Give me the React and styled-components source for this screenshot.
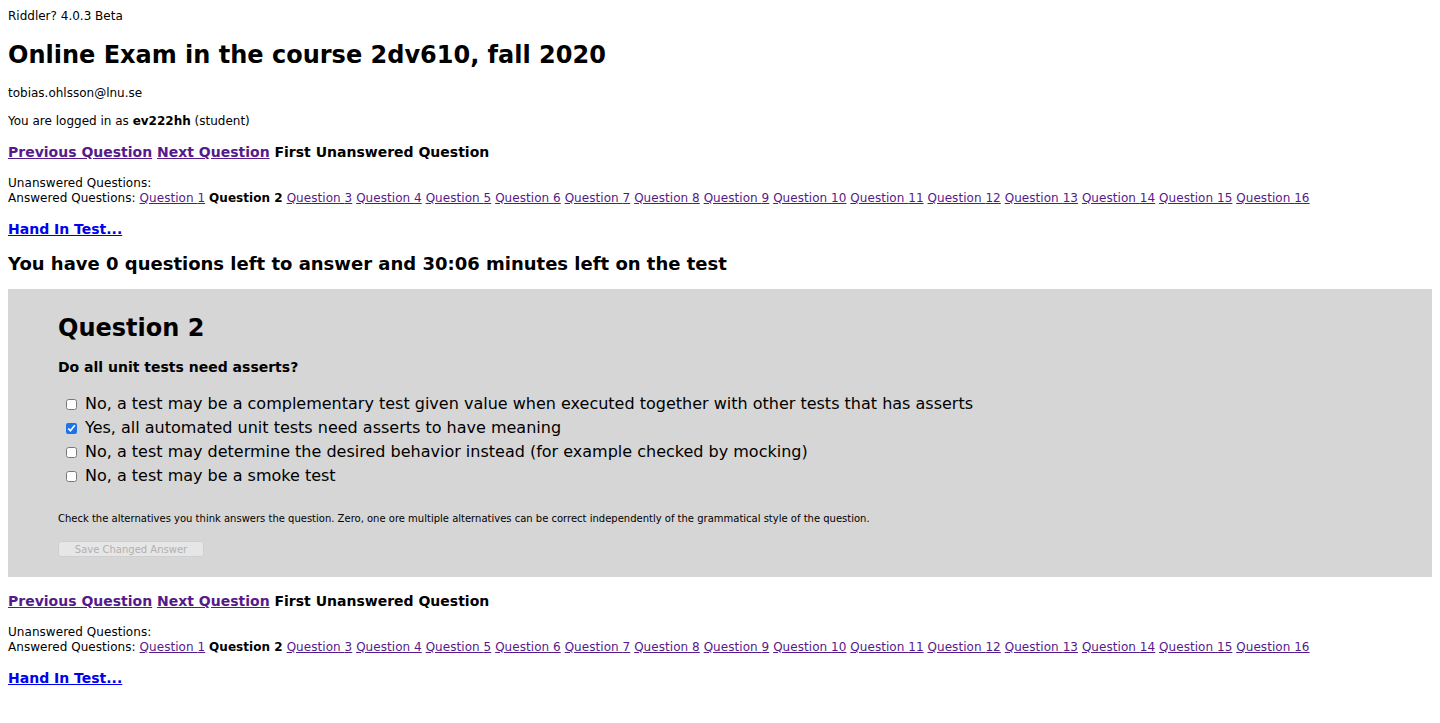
import styled, { createGlobalStyle } from 'styled-components';

const GlobalStyle = createGlobalStyle`
    body {
        margin: 0;
        background: #fff;
        color: #000;
        font-family: "DejaVu Sans", Verdana, sans-serif;
    }
`;

const Page = styled.div`
    padding: 8px 8px 20px;
`;

const Version = styled.div`
    font-size: 12px;
    line-height: 16px;
`;

const Title = styled.h1`
    margin: 15px 0 0;
    font-size: 24px;
    line-height: 32px;
    font-weight: bold;
`;

const Line = styled.p`
    margin: ${({top}) => top}px 0 0;
    font-size: 12px;
    line-height: 16px;
`;

const Nav = styled.div`
    margin-top: ${({top}) => top}px;
    font-size: 14px;
    line-height: 18px;
    font-weight: bold;
`;

const VisitedLink = styled.a`
    color: #551a8b;
    text-decoration: underline;
`;

const HandInLink = styled.a`
    color: #0000ee;
    text-decoration: underline;
    font-weight: bold;
`;

const QuestionList = styled.div`
    margin-top: ${({top}) => top}px;
    font-size: 12px;
    line-height: 15px;
    letter-spacing: 0.05px;
`;

const HandIn = styled.div`
    margin-top: ${({top}) => top}px;
    font-size: 14px;
    line-height: 18px;
`;

const Status = styled.h2`
    margin: 14px 0 0;
    font-size: 18px;
    line-height: 24px;
`;

const QuestionBox = styled.section`
    margin-top: 13px;
    background: #d6d6d6;
    padding: 24px 50px 20px;
`;

const QuestionTitle = styled.h3`
    margin: 0;
    font-size: 24px;
    line-height: 31px;
`;

const QuestionText = styled.p`
    margin: 15px 0 0;
    font-size: 14px;
    line-height: 17px;
    font-weight: bold;
`;

const Options = styled.div`
    margin-top: 16px;
    padding-left: 8px;
`;

const Option = styled.label`
    display: flex;
    align-items: center;
    font-size: 16px;
    line-height: 24px;
`;

const Box = styled.input`
    width: 11px;
    height: 11px;
    margin: 1px 8px 0 0;
    accent-color: #1a73e8;
`;

const Note = styled.p`
    margin: 24px 0 0;
    font-size: 10px;
    line-height: 14px;
`;

const SaveButton = styled.button`
    display: block;
    margin-top: 15px;
    width: 146px;
    height: 16px;
    padding: 0;
    font-family: "DejaVu Sans", sans-serif;
    font-size: 10px;
    color: #b0b0b0;
    background: #e6e6e6;
    border: 1px solid #cfcfcf;
    border-radius: 3px;
`;

const questions = Array.from({length: 16}, (_, i) => i + 1);

const options = [
    ['No, a test may be a complementary test given value when executed together with other tests that has asserts', false],
    ['Yes, all automated unit tests need asserts to have meaning', true],
    ['No, a test may determine the desired behavior instead (for example checked by mocking)', false],
    ['No, a test may be a smoke test', false],
];

function Navigation({top}) {
    return (
        <Nav top={top}>
            <VisitedLink href="#">Previous Question</VisitedLink>{' '}
            <VisitedLink href="#">Next Question</VisitedLink>{' '}
            First Unanswered Question
        </Nav>
    );
}

function Questions({top}) {
    return (
        <QuestionList top={top}>
            Unanswered Questions:<br />
            Answered Questions:{' '}
            {questions.map((n) => (
                <span key={n}>
                    {n === 2
                        ? <b>Question 2</b>
                        : <VisitedLink href="#">Question {n}</VisitedLink>}{' '}
                </span>
            ))}
        </QuestionList>
    );
}

export default function App() {
    return (
        <Page>
            <GlobalStyle />
            <Version>Riddler? 4.0.3 Beta</Version>
            <Title>Online Exam in the course 2dv610, fall 2020</Title>
            <Line top={14}>tobias.ohlsson@lnu.se</Line>
            <Line top={12}>You are logged in as <b>ev222hh</b> (student)</Line>
            <Navigation top={14} />
            <Questions top={15} />
            <HandIn top={14}><HandInLink href="#">Hand In Test...</HandInLink></HandIn>
            <Status>You have 0 questions left to answer and 30:06 minutes left on the test</Status>

            <QuestionBox>
                <QuestionTitle>Question 2</QuestionTitle>
                <QuestionText>Do all unit tests need asserts?</QuestionText>
                <Options>
                    {options.map(([text, checked]) => (
                        <Option key={text}>
                            <Box type="checkbox" defaultChecked={checked} />
                            {text}
                        </Option>
                    ))}
                </Options>
                <Note>Check the alternatives you think answers the question. Zero, one ore multiple alternatives can be correct independently of the grammatical style of the question.</Note>
                <SaveButton disabled>Save Changed Answer</SaveButton>
            </QuestionBox>

            <Navigation top={15} />
            <Questions top={15} />
            <HandIn top={14}><HandInLink href="#">Hand In Test...</HandInLink></HandIn>
        </Page>
    );
}
